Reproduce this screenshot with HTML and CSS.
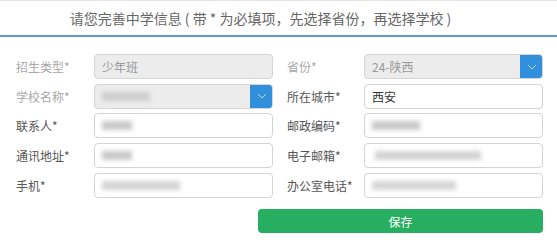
FILE: index.html
```html
<!DOCTYPE html>
<html lang="zh-CN">
<head>
<meta charset="utf-8">
<title>中学信息</title>
<link rel="stylesheet" href="styles.css">
</head>
<body>
<div class="panel">
  <div class="header">请您完善中学信息 ( 带 * 为必填项，先选择省份，再选择学校 )</div>
  <form class="form">
    <label class="label muted">招生类型*</label>
    <div class="field disabled left"><span class="value muted">少年班</span></div>
    <label class="label muted">省份*</label>
    <div class="field disabled select"><span class="value muted">24-陕西</span><span class="caret"><svg width="10" height="6" viewBox="0 0 10 6"><path d="M1 1 L5 5 L9 1" fill="none" stroke="#bcd8f2" stroke-width="1"/></svg></span></div>

    <label class="label muted">学校名称*</label>
    <div class="field disabled select left"><span class="blur w48"></span><span class="caret"><svg width="10" height="6" viewBox="0 0 10 6"><path d="M1 1 L5 5 L9 1" fill="none" stroke="#bcd8f2" stroke-width="1"/></svg></span></div>
    <label class="label">所在城市*</label>
    <div class="field"><span class="value">西安</span></div>

    <label class="label">联系人*</label>
    <div class="field left"><span class="blur w30"></span></div>
    <label class="label">邮政编码*</label>
    <div class="field"><span class="blur w50"></span></div>

    <label class="label">通讯地址*</label>
    <div class="field left"><span class="blur w30"></span></div>
    <label class="label">电子邮箱*</label>
    <div class="field"><span class="blur w106 off3"></span></div>

    <label class="label">手机*</label>
    <div class="field left"><span class="blur w78"></span></div>
    <label class="label">办公室电话*</label>
    <div class="field"><span class="blur w84"></span></div>

    <div class="actions"><button type="button" class="save">保存</button></div>
  </form>
</div>
</body>
</html>
```
FILE: styles.css
```css
html, body {
  margin: 0;
  padding: 0;
  background: #fff;
}
body {
  font-family: "Noto Sans CJK SC", "Noto Sans", sans-serif;
  color: #555;
  width: 557px;
  height: 235px;
  overflow: hidden;
}
.panel {
  border-top: 1px solid #e2e2e2;
}
.header {
  height: 34px;
  line-height: 34px;
  text-align: center;
  font-size: 14px;
  color: #666;
  padding-right: 36px;
  border-bottom: 2px solid #5b9bd1;
}
.form {
  display: grid;
  grid-template-columns: 78px 193px 77px 179px;
  row-gap: 4.7px;
  padding: 17px 0 0 16px;
  margin: 0;
}
.field.left {
  margin-right: 14px;
}
.label {
  font-size: 12px;
  line-height: 25px;
  color: #555;
  white-space: nowrap;
}
.label.muted {
  color: #a8a8a8;
}
.field {
  position: relative;
  height: 25px;
  box-sizing: border-box;
  border: 1px solid #d4d4d4;
  border-radius: 4px;
  background: #fff;
  display: flex;
  align-items: center;
  padding-left: 7px;
  overflow: hidden;
}
.field.disabled {
  background: #ececec;
}
.value {
  font-size: 12px;
  color: #333;
}
.value.muted {
  color: #999;
}
.select {
  padding-right: 23px;
}
.caret {
  position: absolute;
  right: -1px;
  top: -1px;
  bottom: -1px;
  width: 23px;
  background: #3090dc;
  border-radius: 0 4px 4px 0;
  display: flex;
  align-items: center;
  justify-content: center;
}
.blur {
  display: inline-block;
  height: 9px;
  background: #c9c9c9;
  filter: blur(2.2px);
}
.w30 { width: 30px; }
.w48 { width: 48px; background: #cfcfcf; }
.w50 { width: 48px; }
.w78 { width: 78px; background: #d4d4d4; }
.w84 { width: 84px; background: #d6d6d6; }
.w106 { width: 106px; background: #d4d4d4; }
.off3 { margin-left: 3px; }
.actions {
  grid-column: 1 / -1;
  display: flex;
  justify-content: flex-end;
  padding-top: 7px;
}
.save {
  width: 285px;
  height: 24px;
  border: none;
  border-radius: 4px;
  background: #27ae60;
  color: #fff;
  font-family: "Noto Sans CJK SC", sans-serif;
  font-size: 12px;
  padding: 0;
}
```
